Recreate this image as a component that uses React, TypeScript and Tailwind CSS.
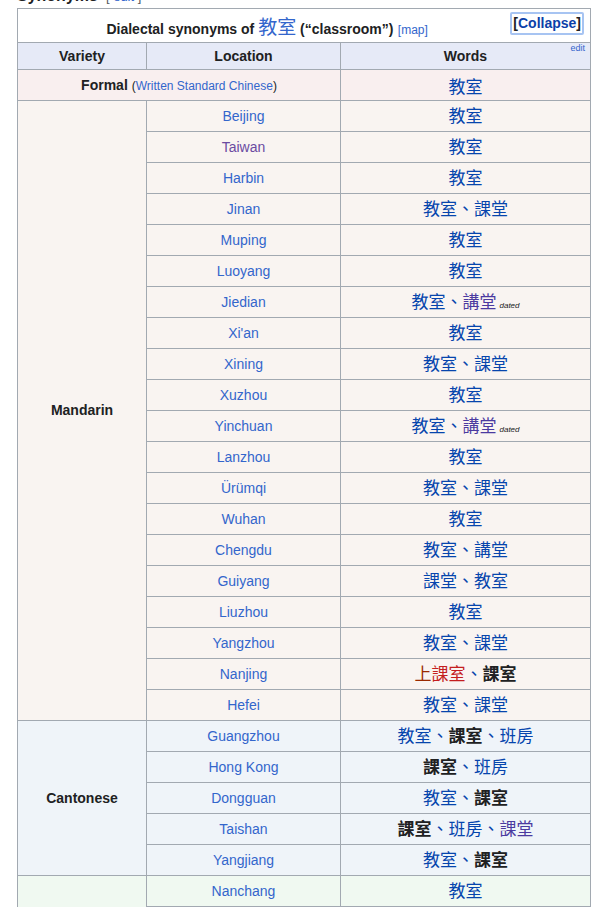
import React from "react";

type W = { t: string; c?: "b" | "v" | "k" | "r" | "r2" };
type Row = { loc: string; visited?: boolean; words: W[]; dated?: boolean };

const mandarin: Row[] = [
  { loc: "Beijing", words: [{ t: "教室" }] },
  { loc: "Taiwan", visited: true, words: [{ t: "教室" }] },
  { loc: "Harbin", words: [{ t: "教室" }] },
  { loc: "Jinan", words: [{ t: "教室" }, { t: "課堂" }] },
  { loc: "Muping", words: [{ t: "教室" }] },
  { loc: "Luoyang", words: [{ t: "教室" }] },
  { loc: "Jiedian", words: [{ t: "教室" }, { t: "講堂", c: "v" }], dated: true },
  { loc: "Xi'an", words: [{ t: "教室" }] },
  { loc: "Xining", words: [{ t: "教室" }, { t: "課堂" }] },
  { loc: "Xuzhou", words: [{ t: "教室" }] },
  { loc: "Yinchuan", words: [{ t: "教室" }, { t: "講堂", c: "v" }], dated: true },
  { loc: "Lanzhou", words: [{ t: "教室" }] },
  { loc: "Ürümqi", words: [{ t: "教室" }, { t: "課堂" }] },
  { loc: "Wuhan", words: [{ t: "教室" }] },
  { loc: "Chengdu", words: [{ t: "教室" }, { t: "講堂" }] },
  { loc: "Guiyang", words: [{ t: "課堂" }, { t: "教室" }] },
  { loc: "Liuzhou", words: [{ t: "教室" }] },
  { loc: "Yangzhou", words: [{ t: "教室" }, { t: "課堂" }] },
  { loc: "Nanjing", words: [{ t: "上課室", c: "r" }, { t: "課室", c: "k" }] },
  { loc: "Hefei", words: [{ t: "教室" }, { t: "課堂" }] },
];

const cantonese: Row[] = [
  { loc: "Guangzhou", words: [{ t: "教室" }, { t: "課室", c: "k" }, { t: "班房" }] },
  { loc: "Hong Kong", words: [{ t: "課室", c: "k" }, { t: "班房" }] },
  { loc: "Dongguan", words: [{ t: "教室" }, { t: "課室", c: "k" }] },
  { loc: "Taishan", words: [{ t: "課室", c: "k" }, { t: "班房" }, { t: "課堂", c: "v" }] },
  { loc: "Yangjiang", words: [{ t: "教室" }, { t: "課室", c: "k" }] },
];

const gan: Row[] = [
  { loc: "Nanchang", words: [{ t: "教室" }] },
  { loc: "Lichuan", words: [{ t: "教室" }] },
  { loc: "Pingxiang", words: [{ t: "教室" }] },
  { loc: "Anyi", words: [{ t: "教室" }] },
];

const cjk = "font-['Noto_Sans_CJK_TC','Noto_Sans_CJK_SC',sans-serif]";

function Word({ w }: { w: W }) {
  if (w.c === "k") return <b className="text-[#202122] font-bold">{w.t}</b>;
  if (w.c === "r")
    return (
      <span>
        <span className="text-[#9a2a00]">{w.t[0]}</span>
        <span className="text-[#c41e1e]">{w.t.slice(1)}</span>
      </span>
    );
  if (w.c === "v") return <span className="text-[#4b3aa0]">{w.t}</span>;
  return <span className="text-[#0645ad]">{w.t}</span>;
}

function Words({ r }: { r: Row }) {
  return (
    <span className={`${cjk} text-[17px] leading-none relative top-[1px]`}>
      {r.words.map((w, i) => (
        <React.Fragment key={i}>
          {i > 0 && <span className="text-[#0645ad]">、</span>}
          <Word w={w} />
        </React.Fragment>
      ))}
      {r.dated && (
        <span className="ml-[3px] font-['Liberation_Sans',Arial,sans-serif] text-[8px] italic text-[#202122]">dated</span>
      )}
    </span>
  );
}

const cell = "border border-[#a2a9b1] text-center align-middle p-0";

function Rows({ label, rows, bg }: { label: string; rows: Row[]; bg: string }) {
  return (
    <>
      {rows.map((r, i) => (
        <tr key={r.loc} className={`${bg} h-[31px]`}>
          {i === 0 && (
            <td rowSpan={rows.length} className={`${cell} font-bold text-[14px] text-[#202122]`}>
              {label}
            </td>
          )}
          <td className={`${cell} text-[14px] ${r.visited ? "text-[#6b4ba1]" : "text-[#3366cc]"}`}>{r.loc}</td>
          <td className={cell}>
            <Words r={r} />
          </td>
        </tr>
      ))}
    </>
  );
}

export default function App() {
  return (
    <div className="w-[606px] h-[907px] overflow-hidden bg-white font-['Liberation_Sans',Arial,sans-serif] text-[#202122]">
      <div className="h-[8px] overflow-hidden relative">
        <div className="absolute left-[17px] top-[-16px] flex items-baseline gap-[8px] whitespace-nowrap">
          <span className="font-bold text-[16px]">Synonyms</span>
          <span className="text-[13px] text-[#54595d]">
            [ <span className="text-[#3366cc]">edit</span> ]
          </span>
        </div>
      </div>
      <table className="ml-[17px] w-[574px] border-collapse border border-[#a2a9b1]">
        <colgroup>
          <col className="w-[129px]" />
          <col className="w-[194px]" />
          <col />
        </colgroup>
        <tbody>
          <tr className="h-[34px] bg-white">
            <td colSpan={3} className="border border-[#a2a9b1] p-0">
              <div className="flex items-center pl-[6px] pr-[6px]">
                <div className="flex-1 text-center pt-[1px]">
                  <span className="font-bold text-[14px]">
                    Dialectal synonyms of{" "}
                    <span className={`${cjk} font-normal text-[19px] text-[#3366cc]`}>教室</span> (“classroom”)
                  </span>{" "}
                  <span className="text-[12px] text-[#3366cc]">[map]</span>
                </div>
                <span className="self-start mt-[1px] border-2 border-[#a7c4f2] rounded-[2px] px-[1px] h-[23px] flex items-center text-[14px] font-bold">
                  [<span className="text-[#0b3fa8]">Collapse</span>]
                </span>
              </div>
            </td>
          </tr>
          <tr className="h-[27px] bg-[#e6eaf7]">
            <td className={`${cell} font-bold text-[14px]`}>Variety</td>
            <td className={`${cell} font-bold text-[14px]`}>Location</td>
            <td className={`${cell} font-bold text-[14px] relative`}>
              Words
              <span className="absolute right-[5px] top-[1px] text-[9px] font-normal text-[#3366cc] leading-none">edit</span>
            </td>
          </tr>
          <tr className="h-[31px] bg-[#f9efef]">
            <td colSpan={2} className={`${cell} text-[14px]`}>
              <b>Formal</b>{" "}
              <span className="text-[12px] text-[#3366cc]">
                <span className="text-[#202122]">(</span>Written Standard Chinese<span className="text-[#202122]">)</span>
              </span>
            </td>
            <td className={cell}>
              <span className={`${cjk} text-[17px] text-[#0645ad] relative top-[1px]`}>教室</span>
            </td>
          </tr>
          <Rows label="Mandarin" rows={mandarin} bg="bg-[#f9f4f1]" />
          <Rows label="Cantonese" rows={cantonese} bg="bg-[#eff4f9]" />
          <Rows label="Gan" rows={gan} bg="bg-[#f0f9f1]" />
        </tbody>
      </table>
    </div>
  );
}
